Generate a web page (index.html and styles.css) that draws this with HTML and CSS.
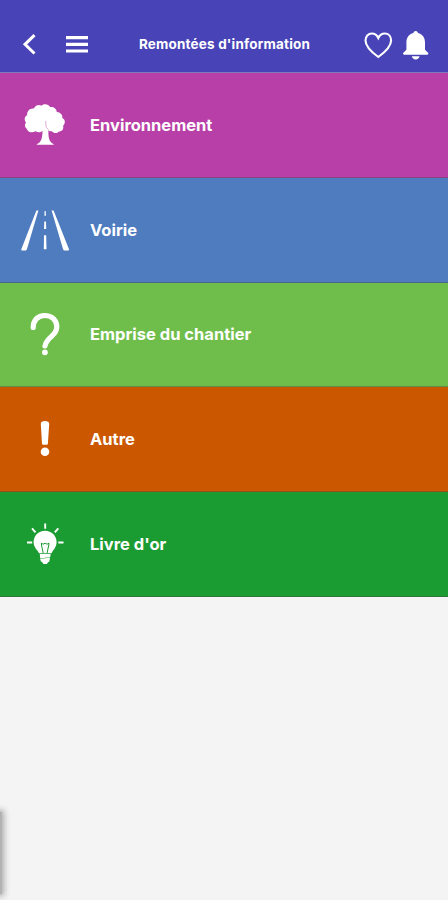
FILE: index.html
```html
<!DOCTYPE html>
<html lang="fr">
<head>
<meta charset="utf-8">
<title>Remontées d'information</title>
<link rel="stylesheet" href="styles.css">
</head>
<body>
<header class="topbar">
  <svg class="nav-icons" viewBox="0 0 100 34" aria-hidden="true">
    <path class="stroke" stroke-width="3" d="M34.500 8.200 25 17.300l9.500 9.200"/>
    <path class="stroke" stroke-width="3.200" d="M66 10.700h22M66 17.300h22M66 24h22"/>
  </svg>
  <h1 class="title">Remontées d'information</h1>
  <svg class="actions" viewBox="0 0 70 36" aria-hidden="true">
    <path class="stroke" stroke-width="2.100" d="M16.300 31C9 25.700 3.500 20.500 3.500 14.500c0-4.200 2.700-7 6.300-7 3 0 5.200 1.700 6.500 4.500 1.300-2.800 3.500-4.500 6.500-4.500 3.600 0 6.300 2.800 6.300 7 0 6-5.500 11.200-12.800 16.500z"/>
    <path class="fill" d="M53.700 5c1.300 0 2 .8 2.300 2 4.500 1.200 7 4.600 7 9.500v7.200l3 3.100c.8.900.3 2-1 2H42.400c-1.300 0-1.800-1.100-1-2l3-3.100v-7.200c0-4.900 2.500-8.300 7-9.500.3-1.200 1-2 2.300-2zM49.800 30.300h7.800c-.5 2-1.900 3.200-3.900 3.200s-3.400-1.200-3.900-3.200z"/>
  </svg>
</header>
<main class="categories">
  <a class="row environment">
    <svg class="icon" viewBox="0 0 90 104" aria-hidden="true">
      <g transform="translate(0 6) scale(1 1.020)">
        <path class="fill" d="M43 50c-1.500 2.600-5.200 3-7.400 1.200-3.500 2-7.800.9-8.700-2.300-2.200-1.500-2.600-4.200-.9-6.300-2.200-2.400-1.500-5.800 1.200-7.200-.6-4.100 3-7.100 6.600-6.500 1.700-3 5-4.100 7.800-2.700 2.600-2.500 7-1.500 8.500 1.300 3.500-.5 6.400 1.600 6.700 4.800 3.600.2 6 2.900 5.500 6 3.200 1.600 3.300 5.500.8 7.500 1 3.300-1.200 5.800-4.300 5.700-1.500 2-5 2.200-7-.2-2 0-2.800-.3-3.300-1.300-.4 5 .4 10.200 2.700 12.300.8.800 2 1.200 2.800 2.200H36.500c.9-1 2.200-1.400 3-2.200C42 59.800 42.500 55.400 42.500 50z"/>
        <path class="branch" d="M45.600 41l.6 6.500 2.300 2"/>
      </g>
    </svg>
    <span class="label">Environnement</span>
  </a>
  <a class="row road">
    <svg class="icon" viewBox="0 0 90 104" aria-hidden="true">
      <path class="fill" d="M36.400 32.500h2L27 71c-.3 1-1 1.500-2 1.500h-2.500c-1.200 0-1.500-.8-1-1.800zM51.600 32.500h2l15.200 38.200c.5 1 .2 1.800-1 1.800H65c-1 0-1.700-.5-2-1.500zM44.600 33h1.100l.2 4.800h-1.500zM44.300 43.500h1.700l.2 7.500H44zM44 57.300h2.200l.3 13.900h-2.700z"/>
    </svg>
    <span class="label">Voirie</span>
  </a>
  <a class="row site">
    <svg class="icon" viewBox="0 0 90 104" aria-hidden="true">
      <path class="stroke" stroke-width="5.200" stroke-linecap="round" stroke-linejoin="round" d="M33.200 45.500c0-7 4.500-12 11.500-12s12.100 4.500 12.100 11.200c0 7-4.800 8.300-8.500 13-1.900 2.300-3 4-3.300 6.300"/>
      <circle class="fill" cx="44.900" cy="70.300" r="2.900"/>
    </svg>
    <span class="label">Emprise du chantier</span>
  </a>
  <a class="row other">
    <svg class="icon" viewBox="0 0 90 104" aria-hidden="true">
      <path class="fill" d="M40.800 37c0-2.200 1.600-3 4.100-3s4.300.8 4.300 3l-1.300 19.500c0 .8-.5 1.200-1.200 1.200h-3.500c-.7 0-1.100-.4-1.200-1.200z"/>
      <circle class="fill" cx="45" cy="64.700" r="4.300"/>
    </svg>
    <span class="label">Autre</span>
  </a>
  <a class="row guestbook">
    <svg class="icon" viewBox="0 0 90 104" aria-hidden="true">
      <path class="fill" d="M45 38.800c6.600 0 11.600 5 11.600 11.300 0 5.200-3.200 7.500-5 11.100H39c-1.900-3.600-5.400-5.900-5.400-11.100 0-6.300 4.800-11.300 11.400-11.300zM39.800 61.900h10.900l-.5 3-10 1.700zM40.100 67.100l10-1.600-.8 4c-1.200.5-2 1.200-2.300 2.500h-3.700c-.2-1.200-1-1.800-2.300-2.500z"/>
      <path class="rays" d="M45.200 31.500v5.200M32 36.300l3.500 4M58.300 36.300l-3.500 4M27 50.500h5.200M58.300 50.500h5.200"/>
      <path class="filament" d="M41.500 51v2l1.700 8M48.800 51v2l-1.700 8M41.200 51.200l2 1 1.900-1 2 1 2-1"/>
    </svg>
    <span class="label">Livre d'or</span>
  </a>
</main>
<div class="drawer-edge"></div>
</body>
</html>
```
FILE: styles.css
```css
* {
  box-sizing: border-box;
}

body {
  margin: 0;
  height: 900px;
  background: #f4f4f4;
  font-family: Inter, "Liberation Sans", sans-serif;
  color: #fff;
  position: relative;
  overflow: hidden;
}

.topbar {
  height: 73px;
  padding-top: 16px;
  display: grid;
  grid-template-columns: 100px 1fr 100px;
  align-items: center;
  background: #4844b7;
  border-bottom: 1px solid #8179bd;
}

.nav-icons {
  width: 100px;
  height: 34px;
}

.title {
  margin: 0;
  padding-left: 1px;
  font-size: 13.500px;
  line-height: 20px;
  font-weight: 700;
  letter-spacing: .18px;
  text-align: center;
  white-space: nowrap;
}

.actions {
  width: 70px;
  height: 36px;
  margin-left: 14px;
}

.fill {
  fill: #fff;
}

.stroke {
  fill: none;
  stroke: #fff;
}

.categories {
  display: grid;
  grid-template-rows: repeat(5, 104.780px);
}

.row {
  display: flex;
  align-items: center;
  border-bottom: 1px solid rgba(70, 70, 70, .4);
}

.icon {
  width: 90px;
  height: 104px;
  flex: none;
}

.label {
  font-size: 16.500px;
  line-height: 24px;
  font-weight: 700;
}

.environment { background: #b83fa7; }
.road { background: #4e7cbf; }
.site { background: #6fbe4b; }
.other { background: #cb5700; }
.guestbook { background: #1b9c32; }

.branch {
  fill: none;
  stroke: #b83fa7;
  stroke-width: .7;
  opacity: .6;
}

.rays {
  fill: none;
  stroke: #fff;
  stroke-width: 1.900;
}

.filament {
  fill: none;
  stroke: #1b9c32;
  stroke-width: 1;
}

.drawer-edge {
  position: absolute;
  left: -8px;
  top: 812px;
  width: 10px;
  height: 82px;
  background: #b2b2b2;
  box-shadow: 0 0 6px 2px #aaa;
}
```
